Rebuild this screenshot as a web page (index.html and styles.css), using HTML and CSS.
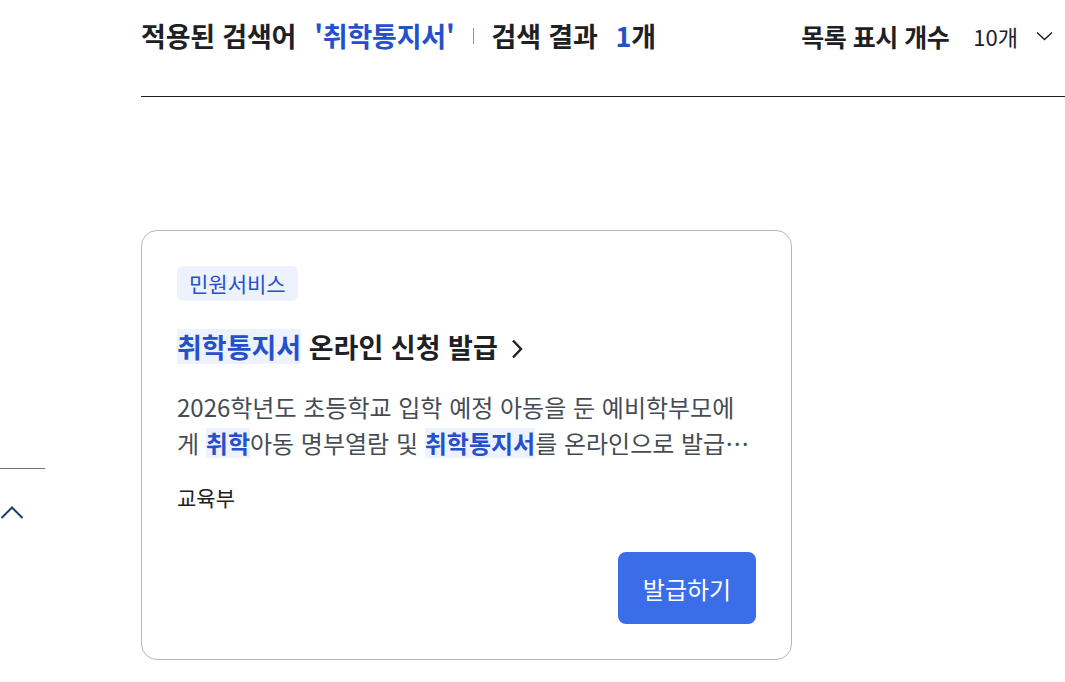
FILE: index.html
```html
<!DOCTYPE html>
<html lang="ko">
<head>
<meta charset="utf-8">
<title>검색 결과</title>
<link rel="stylesheet" href="styles.css">
</head>
<body>
<div class="page">
  <aside class="side">
    <div class="side-line"></div>
    <button class="side-toggle" aria-label="접기">
      <svg width="24" height="16" viewBox="0 0 24 16"><path d="M1.5 14 L12 3.5 L22.5 14" fill="none" stroke="#1d3a6e" stroke-width="2"/></svg>
    </button>
  </aside>
  <main class="main">
    <header class="result-head">
      <div class="summary">
        <span class="label">적용된 검색어</span>
        <span class="keyword">'취학통지서'</span>
        <span class="divider"></span>
        <span class="label">검색 결과</span>
        <span class="count"><em>1</em>개</span>
      </div>
      <div class="per-page">
        <span class="pp-label">목록 표시 개수</span>
        <span class="pp-value">10개</span>
        <svg class="pp-caret" width="17" height="10" viewBox="0 0 17 10"><path d="M1 1.5 L8.5 8.5 L16 1.5" fill="none" stroke="#1e2124" stroke-width="1.5"/></svg>
      </div>
    </header>
    <section class="results">
      <article class="card">
        <span class="tag">민원서비스</span>
        <h3 class="card-title"><mark>취학통지서</mark> 온라인 신청 발급<svg class="title-arrow" width="14" height="22" viewBox="0 0 14 22"><path d="M3 2.5 L11 11 L3 19.5" fill="none" stroke="#1e2124" stroke-width="2.4"/></svg></h3>
        <p class="desc">2026학년도 초등학교 입학 예정 아동을 둔 예비학부모에게 <mark>취학</mark>아동 명부열람 및 <mark>취학통지서</mark>를 온라인으로 발급…</p>
        <p class="org">교육부</p>
        <div class="actions"><button class="btn">발급하기</button></div>
      </article>
    </section>
  </main>
</div>
</body>
</html>
```

FILE: styles.css
```css
* { box-sizing: border-box; }
html, body { margin: 0; padding: 0; background: #fff; }
body {
  font-family: "Noto Sans CJK KR", "Noto Sans", sans-serif;
  color: #1e2124;
  overflow: hidden;
  width: 1065px;
  height: 682px;
}
.page {
  display: grid;
  grid-template-columns: 45px 1fr;
  column-gap: 96px;
}
.side { padding-top: 468px; }
.side-line { height: 1px; background: #6f7378; }
.side-toggle {
  margin-top: 35px;
  padding: 0;
  border: 0;
  background: none;
  display: block;
  width: 24px;
  height: 16px;
}
.side-toggle svg { display: block; }

.result-head {
  height: 97px;
  border-bottom: 1px solid #1e2124;
  display: flex;
  justify-content: space-between;
  align-items: flex-start;
  padding-top: 16px;
}
.summary {
  display: flex;
  align-items: center;
  font-size: 27px;
  font-weight: 700;
  line-height: 40px;
  letter-spacing: -0.2px;
}
.keyword { color: #2550cc; margin-left: 18px; }
.divider {
  width: 1px;
  height: 16px;
  background: #8a949e;
  margin: 0 18px;
}
.count { margin-left: 18px; }
.count em { font-style: normal; color: #2550cc; }
.per-page {
  display: flex;
  align-items: center;
  line-height: 40px;
  padding-right: 12px;
}
.pp-label { font-size: 25px; font-weight: 700; letter-spacing: -0.5px; }
.pp-value { font-size: 22px; margin-left: 24px; color: #1e2124; }
.pp-caret { margin-left: 18px; }

.results { padding-top: 133px; }
.card {
  width: 651px;
  height: 430px;
  border: 1px solid #b1b8be;
  border-radius: 16px;
  padding: 35px 35px;
  display: flex;
  flex-direction: column;
  align-items: flex-start;
}
.tag {
  display: inline-block;
  background: #eef2fc;
  color: #2550cc;
  font-size: 21px;
  line-height: 35px;
  height: 35px;
  padding: 0 12px;
  border-radius: 6px;
}
mark {
  display: inline-block;
  background: #eef2fc;
  color: #2550cc;
  font-weight: 700;
  line-height: 30px;
}
.card-title {
  margin: 28px 0 0;
  font-size: 27px;
  font-weight: 700;
  line-height: 36px;
}
.card-title mark { line-height: 35px; }
.title-arrow {
  display: inline-block;
  margin-left: 12px;
  vertical-align: -2px;
}
.desc {
  margin: 24px 0 0;
  font-size: 24px;
  line-height: 36px;
  color: #464c53;
}
.org {
  margin: 21px 0 0;
  font-size: 21px;
  line-height: 30px;
  color: #1e2124;
}
.actions {
  margin-top: auto;
  align-self: stretch;
  display: flex;
  justify-content: flex-end;
}
.btn {
  width: 138px;
  height: 72px;
  border: 0;
  border-radius: 8px;
  background: #3b6de8;
  color: #fff;
  font-family: inherit;
  font-size: 24px;
}
```
